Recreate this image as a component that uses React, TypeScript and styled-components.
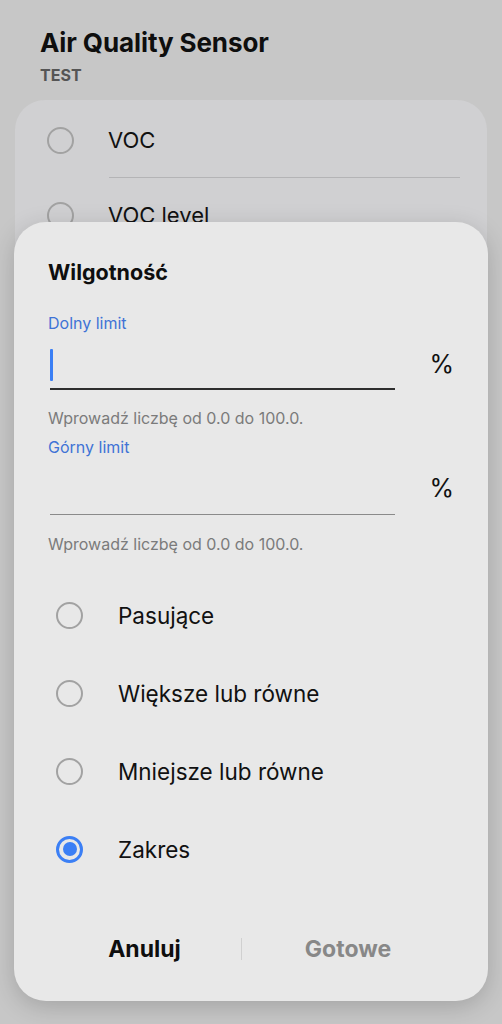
import styled, { createGlobalStyle } from "styled-components";

const GlobalStyle = createGlobalStyle`
  html, body {
    margin: 0;
    padding: 0;
    background: #c7c7c7;
    font-family: Inter, "Noto Sans", "Liberation Sans", sans-serif;
  }
`;

const Page = styled.div`
  position: relative;
  width: 502px;
  height: 1024px;
  overflow: hidden;
  background: #c7c7c7;
`;

const Header = styled.div`
  padding: 27px 0 0 40px;
  height: 100px;
  box-sizing: border-box;
`;

const Title = styled.div`
  font-size: 26px;
  font-weight: 700;
  line-height: 32px;
  color: #0e0e0e;
  letter-spacing: -0.1px;
`;

const Subtitle = styled.div`
  font-size: 16px;
  font-weight: 700;
  line-height: 18px;
  color: #555;
  margin-top: 7px;
`;

const ListCard = styled.div`
  margin: 0 15px;
  background: #d0d0d2;
  border-radius: 30px;
  padding-top: 12px;
  height: 400px;
`;

const ListRow = styled.div`
  display: flex;
  align-items: center;
  height: 56px;
  padding-left: 32px;
  gap: 34px;
  font-size: 22px;
  color: #111;
`;

const ListDivider = styled.div`
  height: 1px;
  background: #b4b4b6;
  margin: 9px 27px 9px 94px;
`;

const Circle = styled.span<{ $on?: boolean }>`
  width: 27px;
  height: 27px;
  box-sizing: border-box;
  border-radius: 50%;
  border: ${(p) => (p.$on ? "3px solid #3b7ff5" : "2px solid #a2a2a2")};
  display: flex;
  align-items: center;
  justify-content: center;
  flex-shrink: 0;

  &::after {
    content: "";
    display: ${(p) => (p.$on ? "block" : "none")};
    width: 14px;
    height: 14px;
    border-radius: 50%;
    background: #3b7ff5;
  }
`;

const Sheet = styled.div`
  position: absolute;
  top: 222px;
  left: 14px;
  width: 474px;
  height: 779px;
  box-sizing: border-box;
  background: #e8e8e8;
  border-radius: 32px;
  box-shadow: 0 6px 24px rgba(0, 0, 0, 0.18);
  padding: 37px 34px 0 34px;
  display: flex;
  flex-direction: column;
`;

const SheetTitle = styled.div`
  font-size: 21.5px;
  font-weight: 700;
  line-height: 26px;
  color: #0e0e0e;
`;

const FieldLabel = styled.div<{ $top: number }>`
  margin-top: ${(p) => p.$top}px;
  font-size: 16px;
  line-height: 20px;
  color: #3f73d6;
`;

const InputRow = styled.div`
  display: flex;
  align-items: flex-start;
  margin-top: 8px;
`;

const InputBox = styled.div<{ $focus?: boolean }>`
  flex: 0 0 345px;
  margin-left: 2px;
  box-sizing: border-box;
  height: ${(p) => (p.$focus ? "49px" : "50px")};
  border-bottom: ${(p) => (p.$focus ? "2px solid #2e2e2e" : "1px solid #8a8a8a")};
  display: flex;
  align-items: flex-start;
`;

const Caret = styled.span`
  width: 3px;
  height: 32px;
  margin-top: 8px;
  background: #3b7ff5;
  border-radius: 1px;
`;

const Unit = styled.div`
  margin-left: auto;
  margin-top: 9px;
  font-size: 25px;
  line-height: 28px;
  color: #111;
`;

const Helper = styled.div<{ $top: number }>`
  margin-top: ${(p) => p.$top}px;
  font-size: 16px;
  line-height: 20px;
  color: #7b7b7b;
`;

const Options = styled.div`
  margin-top: 22px;
  display: flex;
  flex-direction: column;
`;

const OptionRow = styled.div`
  display: flex;
  align-items: center;
  height: 78px;
  padding-left: 8px;
  gap: 35px;
  font-size: 22.5px;
  color: #111;
`;

const Actions = styled.div`
  margin-top: auto;
  margin-bottom: 32px;
  display: flex;
  align-items: center;
  height: 40px;
`;

const ActionButton = styled.div<{ $muted?: boolean }>`
  flex: ${(p) => (p.$muted ? "1" : "0 0 193px")};
  text-align: center;
  font-size: 23px;
  font-weight: 700;
  color: ${(p) => (p.$muted ? "#888888" : "#0e0e0e")};
`;

const ActionDivider = styled.span`
  width: 1px;
  height: 22px;
  background: #d0d0d0;
`;

const options = [
  { label: "Pasujące", on: false },
  { label: "Większe lub równe", on: false },
  { label: "Mniejsze lub równe", on: false },
  { label: "Zakres", on: true },
];

export default function App() {
  return (
    <Page>
      <GlobalStyle />
      <Header>
        <Title>Air Quality Sensor</Title>
        <Subtitle>TEST</Subtitle>
      </Header>
      <ListCard>
        <ListRow>
          <Circle />
          VOC
        </ListRow>
        <ListDivider />
        <ListRow>
          <Circle />
          VOC level
        </ListRow>
      </ListCard>

      <Sheet>
        <SheetTitle>Wilgotność</SheetTitle>

        <FieldLabel $top={28}>Dolny limit</FieldLabel>
        <InputRow>
          <InputBox $focus>
            <Caret />
          </InputBox>
          <Unit>%</Unit>
        </InputRow>
        <Helper $top={18}>Wprowadź liczbę od 0.0 do 100.0.</Helper>

        <FieldLabel $top={9}>Górny limit</FieldLabel>
        <InputRow>
          <InputBox />
          <Unit>%</Unit>
        </InputRow>
        <Helper $top={19}>Wprowadź liczbę od 0.0 do 100.0.</Helper>

        <Options>
          {options.map((o) => (
            <OptionRow key={o.label}>
              <Circle $on={o.on} />
              {o.label}
            </OptionRow>
          ))}
        </Options>

        <Actions>
          <ActionButton>Anuluj</ActionButton>
          <ActionDivider />
          <ActionButton $muted>Gotowe</ActionButton>
        </Actions>
      </Sheet>
    </Page>
  );
}
